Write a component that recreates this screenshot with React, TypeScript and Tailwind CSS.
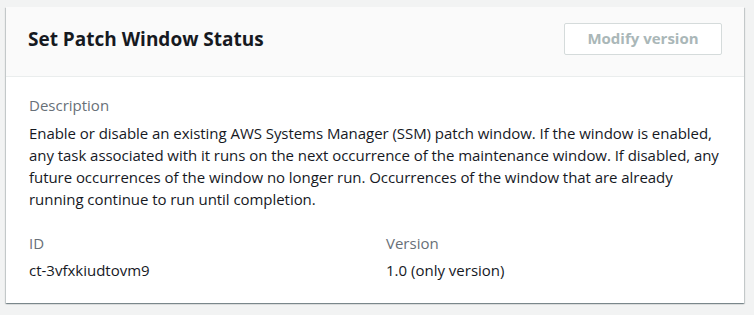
import React from 'react';

const details = [
    { label: 'ID', value: 'ct-3vfxkiudtovm9' },
    { label: 'Version', value: '1.0 (only version)' },
];

const descriptionLines = [
    'Enable or disable an existing AWS Systems Manager (SSM) patch window. If the window is enabled,',
    'any task associated with it runs on the next occurrence of the maintenance window. If disabled, any',
    'future occurrences of the window no longer run. Occurrences of the window that are already',
    'running continue to run until completion.',
];

export default function App() {
    return (
        <div className="min-h-[315px] bg-[#f2f3f3] pl-[6px] pr-[10px] pt-[7px] font-['Open_Sans',sans-serif]">
            <div className="bg-white shadow-[0_1px_1px_0_rgba(0,28,36,0.3),1px_1px_1px_0_rgba(0,28,36,0.15),-1px_1px_1px_0_rgba(0,28,36,0.15)]">
                {/* Header */}
                <div className="flex items-center justify-between h-[70px] px-[22px] pb-[6px] bg-[#fafafa] border-b border-[#eaeded]">
                    <h2 className="text-[19px] font-bold text-[#16191f] leading-[24px]">Set Patch Window Status</h2>
                    <button
                        disabled
                        className="w-[158px] h-[32px] rounded-[2px] border border-[#d5dbdb] bg-white text-[15px] font-bold text-[#aab7b8]"
                    >
                        Modify version
                    </button>
                </div>

                {/* Body */}
                <div className="px-[23px] pt-[17px] pb-[22px] text-[15px] leading-[22px]">
                    <div className="text-[#687078]">Description</div>
                    <div className="mt-[6px] text-[#16191f] whitespace-nowrap">
                        {descriptionLines.map(line => (
                            <div key={line} className="tracking-[-0.05px]">{line}</div>
                        ))}
                    </div>
                    <div className="grid grid-cols-2 gap-x-[22px] mt-[22px]">
                        {details.map(d => (
                            <div key={d.label}>
                                <div className="text-[#687078]">{d.label}</div>
                                <div className="mt-[5px] text-[#16191f]">{d.value}</div>
                            </div>
                        ))}
                    </div>
                </div>
            </div>
        </div>
    );
}
